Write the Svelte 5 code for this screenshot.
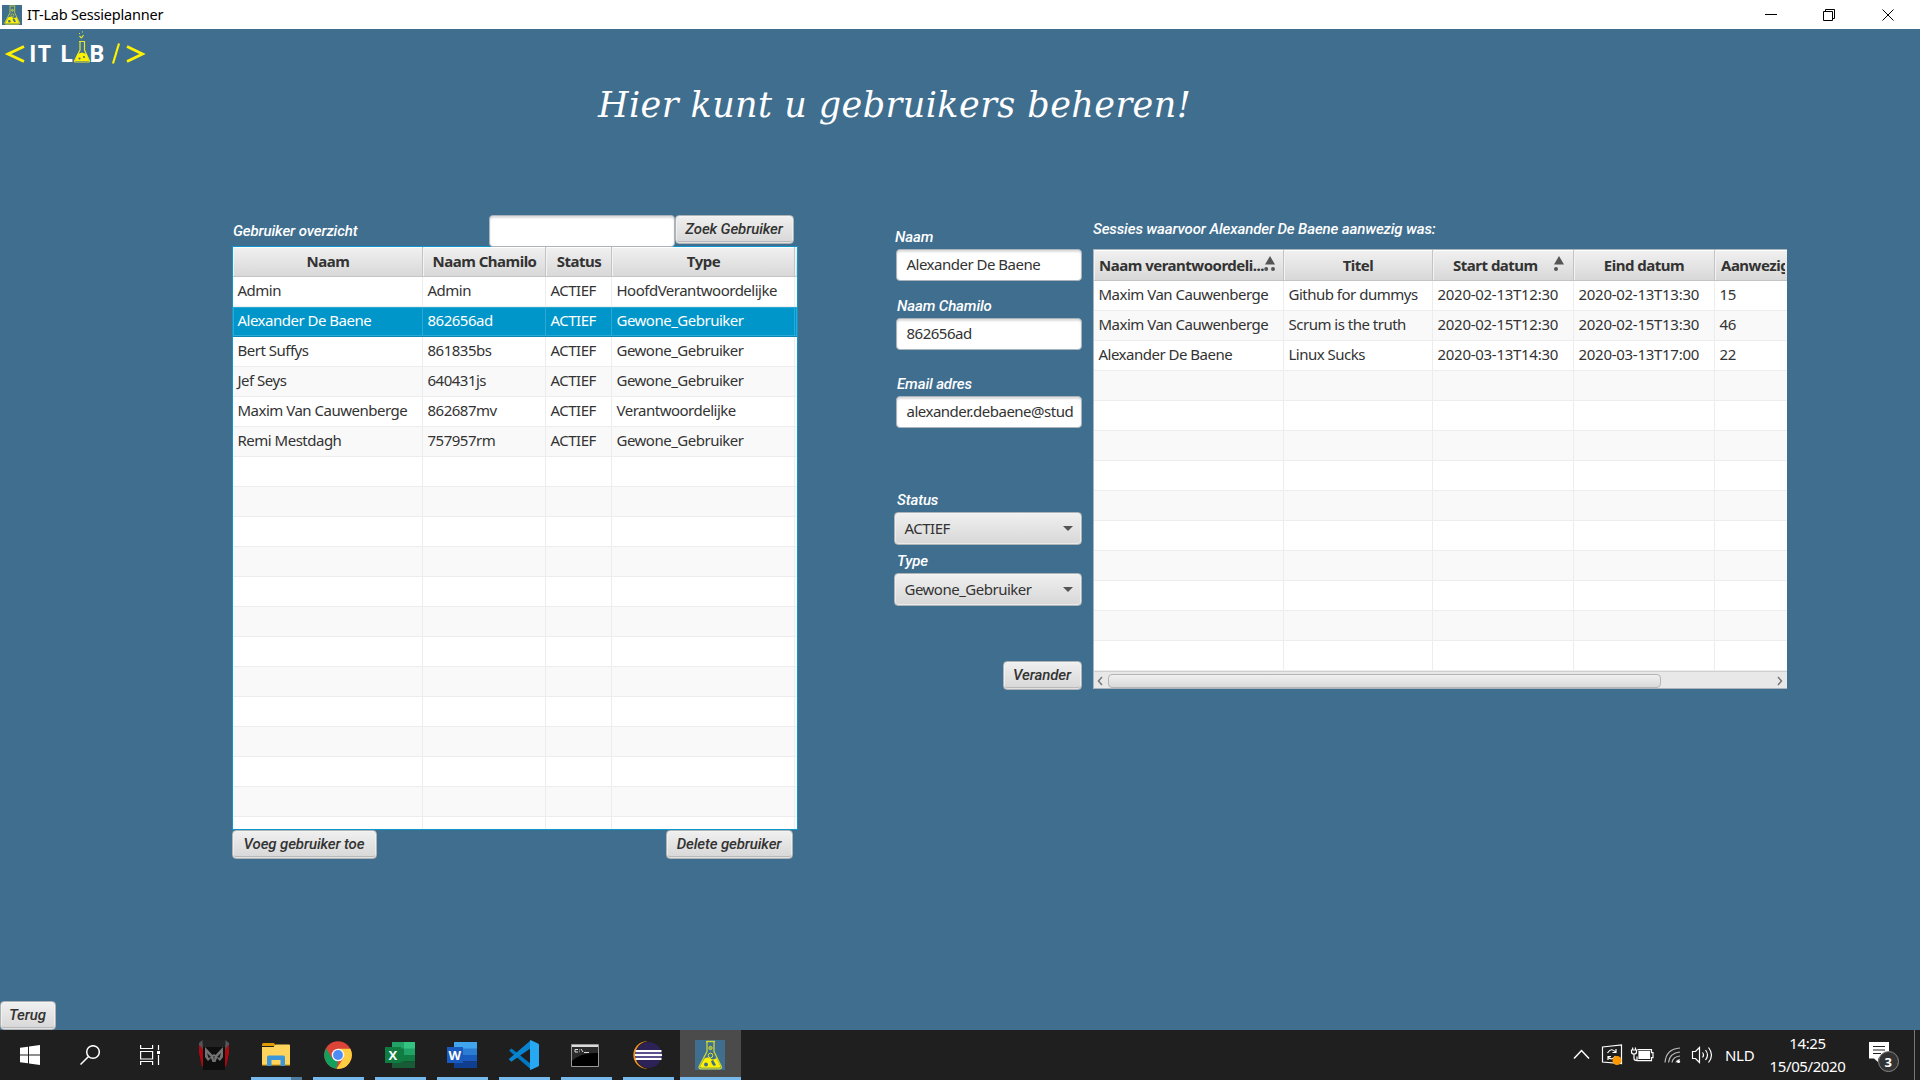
<script>
  const users = [
    ['Admin', 'Admin', 'ACTIEF', 'HoofdVerantwoordelijke'],
    ['Alexander De Baene', '862656ad', 'ACTIEF', 'Gewone_Gebruiker'],
    ['Bert Suffys', '861835bs', 'ACTIEF', 'Gewone_Gebruiker'],
    ['Jef Seys', '640431js', 'ACTIEF', 'Gewone_Gebruiker'],
    ['Maxim Van Cauwenberge', '862687mv', 'ACTIEF', 'Verantwoordelijke'],
    ['Remi Mestdagh', '757957rm', 'ACTIEF', 'Gewone_Gebruiker']
  ];
  const sessions = [
    ['Maxim Van Cauwenberge', 'Github for dummys', '2020-02-13T12:30', '2020-02-13T13:30', '15'],
    ['Maxim Van Cauwenberge', 'Scrum is the truth', '2020-02-15T12:30', '2020-02-15T13:30', '46'],
    ['Alexander De Baene', 'Linux Sucks', '2020-03-13T14:30', '2020-03-13T17:00', '22']
  ];
  const pad = (rows, count, cols) => [
    ...rows,
    ...Array.from({ length: count - rows.length }, () => Array(cols).fill(''))
  ];
  const userRows = pad(users, 19, 4);
  const sessionRows = pad(sessions, 13, 5);
  let selected = $state(1);
</script>

{#snippet flask()}
  <svg class="flask" viewBox="0 0 30 30">
    <rect width="30" height="30" fill="#3f6e8f" />
    <path d="M11 1.500h9M12 2v9.500L4 27q0 1.800 2 1.800h18.500q2 0 2-1.800L19 11.500V2" fill="none" stroke="#c9d43a" stroke-width="1.300" />
    <path d="M9.500 18.500q3-2 6 0t6-.5l4 8.500q0 1.300-1.500 1.300H6.500Q5 27.800 5 26.500z" fill="#fdf000" />
    <circle cx="15.500" cy="8" r="1.700" fill="#8fa860" stroke="#c9d43a" />
    <circle cx="15.500" cy="15.500" r="2.300" fill="#3f6e8f" stroke="#e0e22a" />
    <circle cx="11" cy="24.500" r="1.900" fill="#3f6e8f" />
    <path d="m16 21 2-1 3 5-2 1-2-2z" fill="#3f6e8f" />
  </svg>
{/snippet}

<div class="window">
  <header class="titlebar">
    <span class="app-icon">{@render flask()}</span>
    <span class="app-name">IT-Lab Sessieplanner</span>
    <svg class="controls" width="130" height="12" viewBox="0 0 130 12" fill="none" stroke="#000">
      <path d="M0 5.500h12M58.500 2.500h9v9h-9zM60.500 2.500v-2h9v9h-2M117.500.5l11 11M128.500.5l-11 11" />
    </svg>
  </header>

  <main>
    <svg class="logo" width="150" height="40" viewBox="0 0 150 40">
      <g fill="none" stroke="#fff200" stroke-width="2.800">
        <path d="M24 17.500 8 25l16 7.500" />
        <path d="M127 17.500 142.500 25 127 32.500" />
        <path d="m119 14.500-6 20" stroke-width="2.200" />
      </g>
      <g class="logo-text">
        <text x="29" y="33" textLength="22">IT</text>
        <text x="60" y="33">L</text>
        <text x="89" y="33" textLength="15">B</text>
      </g>
      <path d="M79 12.500h6M80 13v8l-5.500 11q0 1 1 1h13q1 0 1-1L84.500 21v-8M79.500 7l2 2M83.500 6l-2 3M82 3h1M79 4.500h1" fill="none" stroke="#e5e52a" stroke-width="1.200" />
      <path d="m77.500 25 4.500-1.500 4.500 1.500 2.500 7H75z" fill="#fff200" />
      <circle cx="79.500" cy="29.500" r="1.100" fill="#3f6e8f" />
      <circle cx="84" cy="28" r="1" fill="#3f6e8f" />
    </svg>

    <h1>Hier kunt u gebruikers beheren!</h1>

    <div class="content">
      <section class="users">
        <div class="search">
          <label for="q">Gebruiker overzicht</label>
          <input id="q" class="field" />
          <button>Zoek Gebruiker</button>
        </div>
        <div class="table user-table">
          <div class="row head">
            <span>Naam</span><span>Naam Chamilo</span><span>Status</span><span>Type</span><span></span>
          </div>
          {#each userRows as row, i}
            <!-- svelte-ignore a11y_click_events_have_key_events, a11y_no_static_element_interactions -->
            <div class="row" class:odd={i % 2} class:selected={i === selected} onclick={() => (selected = i)}>
              {#each row as cell}<span>{cell}</span>{/each}<span></span>
            </div>
          {/each}
        </div>
        <div class="actions">
          <button>Voeg gebruiker toe</button>
          <button class="delete">Delete gebruiker</button>
        </div>
      </section>

      <section class="form">
        <div class="group naam"><span class="label">Naam</span><div class="field">Alexander De Baene</div></div>
        <div class="group chamilo"><span class="label">Naam Chamilo</span><div class="field">862656ad</div></div>
        <div class="group email"><span class="label">Email adres</span><div class="field">alexander.debaene@stud</div></div>
        <div class="group status"><span class="label">Status</span><div class="combo">ACTIEF<i></i></div></div>
        <div class="group type"><span class="label">Type</span><div class="combo">Gewone_Gebruiker<i></i></div></div>
        <button class="change">Verander</button>
      </section>

      <section class="sessions">
        <span class="label">Sessies waarvoor Alexander De Baene aanwezig was:</span>
        <div class="table session-table">
          <div class="row head">
            <span class="lead">Naam verantwoordeli...
              <svg class="sort two" width="12" height="16" viewBox="0 0 12 16"><path d="M6 0l5 8.500H1zM2.200 11a2 2 0 1 1 0 4 2 2 0 0 1 0-4zM9 11a2 2 0 1 1 0 4 2 2 0 0 1 0-4z" /></svg>
            </span>
            <span>Titel</span>
            <span class="start">Start datum
              <svg class="sort" width="12" height="16" viewBox="0 0 12 16"><path d="M6 0l5 8.500H1zM3 11a2 2 0 1 1 0 4 2 2 0 0 1 0-4z" /></svg>
            </span>
            <span>Eind datum</span>
            <span class="clip">Aanwezigen</span>
          </div>
          {#each sessionRows as row, i}
            <div class="row" class:odd={i % 2}>
              {#each row as cell}<span>{cell}</span>{/each}
            </div>
          {/each}
          <div class="scrollbar">
            <svg width="6" height="10" viewBox="0 0 6 10"><path d="M5 1 1.500 5 5 9" /></svg>
            <div class="thumb"></div>
            <svg class="end" width="6" height="10" viewBox="0 0 6 10"><path d="M1 1l3.500 4L1 9" /></svg>
          </div>
        </div>
      </section>
    </div>

    <button class="back">Terug</button>
  </main>

  <footer class="taskbar">
    <span class="task system"><svg width="20" height="20" viewBox="0 0 20 20" fill="#fff"><path d="M0 2.800 8 1.700v7.800H0zM9 1.500 20 0v9.500H9zM0 10.500h8v7.800L0 17.200zM9 10.500h11V20L9 18.500z" /></svg></span>
    <span class="task system"><svg width="20" height="20" viewBox="0 0 20 20" fill="none" stroke="#fff" stroke-width="1.500"><circle cx="13" cy="7" r="6.300" /><path d="M8.500 11.500.5 19.500" /></svg></span>
    <span class="task view"><svg width="20" height="20" viewBox="0 0 20 20" fill="none" stroke="#fff" stroke-width="1.200"><path d="M.6 0v3.500h12V0M.6 6.500h12v7.500H.6zM.6 20v-3.500h12V20M18.500 0v5M18.500 10v10" /><path d="M17 6h3v3h-3z" fill="#fff" stroke="none" /></svg></span>
    <span class="task">
      <svg width="30" height="30" viewBox="0 0 30 30">
        <path d="M4 0h22v30H4z" fill="#0e0e0e" /><path d="M4 0h22v7H4z" fill="#222" />
        <path d="M3.500 0 0 3v5l4 3zM26.500 0 30 3v5l-4 3z" fill="#555" />
        <path d="M0 5v8l3 14 1-1V10L1.500 6zM30 5v8l-3 14-1-1V10l2.500-4z" fill="#a90a12" />
        <path d="M6 7l7.500 8 1.500-1 1.500 1L24 7v10l-3 4-3-3-1.500 4h-3L12 18l-3 3-3-4z" fill="#747474" />
        <path d="M8 13l4 4-2.500 1zM22 13l-4 4 2.500 1zM14.500 16l.5 5 .5-5z" fill="#161616" />
      </svg>
    </span>
    <span class="task open stacked">
      <svg width="28" height="24" viewBox="0 0 28 24"><path d="M0 1.500Q0 0 1.500 0H12l2 3H0z" fill="#e09a00" /><path d="M0 4h11.500l2-2.500H27q1 0 1 1V22H0z" fill="#ffd35c" /><path d="M0 21h28v1.500H0z" fill="#edb62f" /><path d="M5 23V14q0-1.500 1.500-1.500h15Q23 12.500 23 14v9h-4.500v-6h-9v6z" fill="#3c96dc" /></svg>
    </span>
    <span class="task open">
      <svg width="28" height="28" viewBox="0 0 28 28"><circle cx="14" cy="14" r="13.800" fill="#db4437" /><path d="M2 7.200 8.300 17.500 14 20l-1.500 7.800A13.900 13.900 0 0 1 2 7.200z" fill="#12a05d" /><path d="M14 7.800h12.400A13.900 13.900 0 0 1 12.500 27.800L19.500 17z" fill="#ffcd40" /><circle cx="14" cy="14" r="6.300" fill="#f4f4f4" /><circle cx="14" cy="14" r="4.900" fill="#4d8bf5" /></svg>
    </span>
    <span class="task open">
      <svg width="30" height="26" viewBox="0 0 30 26"><path d="M7 0h12v7H7z" fill="#21a366" /><path d="M19 0h11v7H19z" fill="#33c481" /><path d="M7 6.500h12V20H7z" fill="#107c41" /><path d="M19 6.500h11V13H19z" fill="#21a366" /><path d="M19 13h11v6.500H19z" fill="#107c41" /><path d="M7 19.500h23V26H7z" fill="#185c37" /><path d="M0 5h16v16H0z" fill="#107c41" /><text x="3.500" y="17.500">X</text></svg>
    </span>
    <span class="task open">
      <svg width="30" height="26" viewBox="0 0 30 26"><path d="M7 0h23v7H7z" fill="#41a5ee" /><path d="M7 6.500h23V13H7z" fill="#2b7cd3" /><path d="M7 13h23v6.500H7z" fill="#185abd" /><path d="M7 19.500h23V26H7z" fill="#103f91" /><path d="M0 5h16v16H0z" fill="#185abd" /><text x="1.500" y="17.500">W</text></svg>
    </span>
    <span class="task open">
      <svg width="30" height="30" viewBox="0 0 30 30"><path d="M2.500 8.500 22 24v5.500L.5 11v-1z" fill="#0079c4" /><path d="M2.500 21.500 22 6V.5L.5 19v1z" fill="#0a8edb" /><path d="M2.500 21.500.5 20q-.8-.8 0-1.500L22 .3V8z" fill="#0a84cf" /><path d="m21.500 0 7.500 3.500q1 .5 1 1.500v20q0 1-1 1.500L21.500 30q-.5-.5-.5-1V1q0-.5.500-1z" fill="#26a8f2" /></svg>
    </span>
    <span class="task open shift">
      <svg width="28" height="23" viewBox="0 0 28 23"><path d="M.5.5h27v22H.5z" fill="#000" stroke="#9a9a9a" /><path d="M1 1h26v2H1z" fill="#dcdcdc" /><path d="M1 3h26v6Q10 8 1 17z" fill="#2b2b2b" /><path d="M4 5.500h3M4 8h3M4 5.500V8M8.500 5.500v.8M8.500 7.500v.7M10 5l2 3M13 8.500h5" stroke="#ddd" fill="none" /></svg>
    </span>
    <span class="task open shift">
      <svg width="30" height="28" viewBox="0 0 30 28"><path d="M15 .3A13.700 13.700 0 0 0 15 27.700z" fill="#f7941e" /><circle cx="17" cy="14" r="13.800" fill="#1f1f1f" /><circle cx="16.800" cy="14" r="13" fill="#2c2255" /><path d="M3.500 10h26M3 14h27M3.500 18h26" stroke="#fff" stroke-width="2" /><path d="M3.500 12h26M3.500 16h26" stroke="#6b60a0" stroke-width="1.500" /></svg>
    </span>
    <span class="task open active">{@render flask()}</span>

    <div class="tray">
      <svg class="tray-icons" width="142" height="24" viewBox="0 0 142 24" fill="none" stroke="#fff" stroke-width="1.200">
        <path d="m1 15.500 7.500-8 7.500 8" stroke-width="1.500" />
        <path d="M29.500 4 48.500 2v18.500l-19-1.500zM34.500 10q4-6 8-1M43 6v3.500h-3.500M42.500 13q-3.500 5-7.500 1M35 17v-3.500h3" />
        <circle cx="44" cy="17.500" r="4.500" fill="#ff9800" stroke="none" />
        <path d="M66 8.500h10.500v7H66z" fill="#fff" /><path d="M64.500 6.600h14v3h1.500v5h-1.500v3H64v-4M58.500 7h5v2q0 2-2.500 2t-2.500-2zM59.700 7V4.500M62.500 7V4.500M61 11v4.500q0 2 3 2" />
        <path d="M92 19.500Q93 6 107 5M95.500 19.500q1-9.500 11.500-10.500M99 19.500q1-6 8-6.500M103 19.500q.5-2.500 4-3" stroke="#bbb" /><circle cx="105.500" cy="18.500" r="1.600" fill="#fff" stroke="none" />
        <path d="M119.500 8.500h3l4-4v15l-4-4h-3zM129.500 9.500q2 2.500 0 5M132.500 7q4 5 0 10M135.500 4.500q6 7.500 0 15" />
      </svg>
      <span class="lang">NLD</span>
      <span class="clock"><span>14:25</span><span>15/05/2020</span></span>
      <svg class="notice" width="34" height="32" viewBox="0 0 34 32"><path d="M1 1h20v16.500h-11V21l-4-3.500H1z" fill="#fff" /><path d="M5 5.500h12M5 9h12M5 12.500h8" stroke="#222" stroke-width="1.200" /><circle cx="20.500" cy="20.500" r="10" fill="#333" stroke="#888" /><text x="16.500" y="25.500">3</text></svg>
    </div>
  </footer>
</div>

<style>
  :global(body) { margin: 0; background: #3f6e8f; }
  * { box-sizing: border-box; }
  .window { width: 1920px; height: 1080px; display: flex; flex-direction: column; overflow: hidden; font: 15px/20px "Noto Sans", "Open Sans", sans-serif; letter-spacing: -0.5px; color: #333; }

  .titlebar { height: 29px; flex: none; background: #fff; display: flex; align-items: center; padding: 0 25px 0 2px; color: #000; }
  .app-icon { width: 20px; height: 20px; }
  .flask { display: block; width: 100%; height: 100%; }
  .app-name { margin: -2px 0 0 5px; font-size: 14.5px; letter-spacing: -0.2px; }
  .controls { margin-left: auto; }

  main { height: 1001px; flex: none; background: #3f6e8f; display: flex; flex-direction: column; align-items: flex-start; }
  .logo { display: block; letter-spacing: 0; }
  .logo-text { font: bold 23px "Open Sans", sans-serif; fill: #fff; }
  h1 { margin: 11px 0 0 598px; height: 50px; font: italic 35px/50px "DejaVu Serif", serif; letter-spacing: 0.44px; color: #fff; white-space: nowrap; }
  .content { display: flex; align-items: flex-start; margin: 85px 0 0 232px; height: 760px; }

  button, label, .label { font: italic 500 15px/20px "Roboto", "Liberation Sans", sans-serif; letter-spacing: -0.12px; }
  label, .label { color: #fff; white-space: nowrap; display: block; }
  button { height: 29px; padding: 0 1px 1px 0; border: 1px solid #aeb3b7; border-radius: 4px; color: #333; background: linear-gradient(#f0f0f0, #d7d7d7); box-shadow: inset 0 0 0 1px #f4f4f4aa, inset 0 -2px 0 #b9b9b9; }
  .field { display: block; width: 186px; height: 32px; border: 1px solid #aab4bc; border-radius: 4px; background: #fff; box-shadow: inset 0 2px 2px #ddd; padding: 0 7px 0 9.5px; line-height: 29px; white-space: nowrap; overflow: hidden; outline: 0; }

  .users { width: 566px; }
  .search { display: flex; height: 31px; align-items: flex-start; }
  .search label { width: 257px; padding: 6px 0 0 1px; }
  .search .field { width: 186px; }
  .search button { width: 119px; margin: 0; }
  .table { background: #fff; overflow: hidden; }
  .row { display: grid; height: 30px; border-bottom: 1px solid #ededed; }
  .row span { border-right: 1px solid #ededed; padding-left: 4.5px; line-height: 27px; white-space: nowrap; overflow: hidden; }
  .row.odd { background: #f9f9f9; }
  .row.selected { background: #0096c9; color: #fff; border-color: #0a87b5; box-shadow: inset 0 0 0 1px #2ba9d6; }
  .row.selected span { border-color: #2ba9d6; }
  .row.head { height: 31px; font-weight: 700; background: linear-gradient(#f1f1f1, #d8d8d8); border-color: #c4c4c4; box-shadow: inset 0 1px #fff; }
  .row.head span { padding: 0; line-height: 30px; text-align: center; border-color: #c4c4c4; box-shadow: inset 1px 0 #f3f3f3; }
  .user-table { height: 584px; border: 1px solid #0f97cb; }
  .user-table .row { grid-template-columns: 190px 123px 66px 183px 2px; }
  .user-table .row.head { height: 30px; }
  .user-table .row.head span { line-height: 29px; padding-left: 1px; }
  .row span:last-child { border-right: 0; }
  .user-table .row:not(.head) span { padding-left: 4.5px; }
  .actions { display: flex; justify-content: space-between; padding-right: 5px; }
  .actions button { width: 145px; }
  .actions .delete { width: 127px; }

  .form { width: 188px; margin-left: 96px; padding-top: 10px; display: flex; flex-direction: column; }
  .group { display: flex; flex-direction: column; padding-left: 2px; }
  .group .label { height: 24px; padding: 1.5px 0 0 1px; }
  .naam .label { margin-left: -2px; }
  .chamilo { margin-top: 13px; }
  .email { margin-top: 22px; }
  .status { margin-top: 60px; }
  .type { margin-top: 4px; }
  .combo { height: 33px; width: 188px; margin-left: -2px; border: 1px solid #aeb3b7; border-radius: 4px; padding: 0 9.5px; line-height: 31px; background: linear-gradient(#f0f0f0, #d7d7d7); box-shadow: inset 0 0 0 1px #f4f4f4aa; display: flex; justify-content: space-between; align-items: center; }
  .combo i { border: 5px solid transparent; border-top-color: #555; border-bottom: 0; margin-right: -1px; }
  .change { align-self: flex-end; width: 79px; margin-top: 55px; }

  .sessions { width: 694px; margin-left: 11px; padding-top: 4px; }
  .sessions .label { height: 30px; }
  .session-table { height: 440px; border: solid #aab4bc; border-width: 1px 0 1px 1px; display: flex; flex-direction: column; }
  .session-table .row { grid-template-columns: 190px 149px 141px 141px 72px; flex: none; }
  .session-table .row:not(.head) span:nth-child(n + 3) { letter-spacing: -0.28px; }
  .session-table .row.head span.lead { text-align: left; padding-left: 5px; display: flex; align-items: center; }
  .session-table .row.head span.start { display: flex; align-items: center; padding-left: 20px; }
  .session-table .row.head span.clip { text-align: left; padding-left: 6px; margin-right: 2px; }
  .sort { flex: none; margin: -3px 8px 0 auto; fill: #555; }
  .scrollbar { height: 19px; margin-top: auto; position: relative; flex: none; display: flex; align-items: center; padding: 0 4px 1px 3px; background: #e8e8e8; border-top: 1px solid #d0d0d0; }
  .scrollbar svg { fill: none; stroke: #777; stroke-width: 1.5; }
  .thumb { width: 553px; height: 14px; margin-left: 5px; border: 1px solid #b5b5b5; border-radius: 4px; background: linear-gradient(#f0f0f0, #d9d9d9); }
  .end { margin-left: auto; }
  .back { width: 56px; margin-top: auto; flex: none; }

  .taskbar { height: 50px; flex: none; background: #1f1f1f; display: flex; color: #fff; }
  .task { width: 62px; height: 50px; flex: none; display: flex; align-items: center; justify-content: center; background-repeat: no-repeat; letter-spacing: 0; }
  .task.system { width: 60px; }
  .task.view { width: 63px; padding-right: 3px; }
  .task.shift { padding-right: 2px; }
  .task text { font: bold 13px "Open Sans", sans-serif; fill: #fff; }
  .open { background-image: linear-gradient(#76b9ed, #76b9ed); background-size: 51px 3px; background-position: 6px 47px; }
  .stacked { background-image: linear-gradient(90deg, #76b9ed 40px, #4e7a9d 40px); }
  .active { background-color: #4b4b4b; background-size: 61px 3px; background-position: 0 47px; width: 61px; margin-left: 1px; padding-right: 1px; }
  .active .flask { width: 30px; height: 30px; }
  .tray { margin-left: auto; display: flex; align-items: center; height: 50px; width: 347px; }
  .tray-icons { flex: none; }
  .lang { margin-left: 10px; width: 44px; letter-spacing: -0.3px; }
  .clock { width: 77px; text-align: center; display: flex; flex-direction: column; line-height: 23px; letter-spacing: -0.4px; }
  .notice { margin: 4px 12px 0 22px; flex: none; }
  .notice text { font: bold 13px "Open Sans", sans-serif; fill: #fff; }
  .tray::after { content: ""; width: 1px; height: 50px; background: #777; }
</style>
